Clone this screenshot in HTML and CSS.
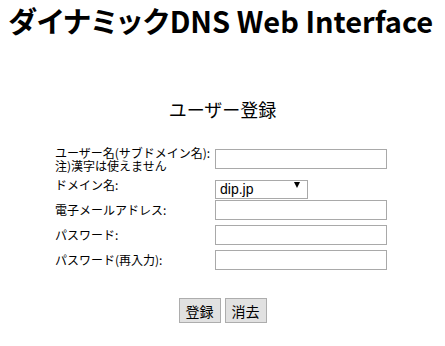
FILE: index.html
```html
<!DOCTYPE html>
<html lang="ja">
<head>
    <meta charset="UTF-8">
    <title>ダイナミックDNS Web Interface - ユーザー登録</title>
    <link rel="stylesheet" href="styles.css">
</head>
<body>
    <!-- ヘッダー -->
    <h1 class="site-title"><span class="title-kana">ダイナミック</span><span class="title-latin">DNS Web Interface</span></h1>

    <!-- ユーザー登録フォーム -->
    <main class="register">
        <h2 class="register-title">ユーザー登録</h2>
        <form class="register-form" onsubmit="return false;">
            <div class="form-grid">
                <label class="form-label label-multi" for="user">ユーザー名(サブドメイン名):<br>注)漢字は使えません</label>
                <div class="form-field"><input type="text" id="user" class="text-input"></div>

                <label class="form-label" for="domain">ドメイン名:</label>
                <div class="form-field">
                    <div class="select-wrap">
                        <select id="domain" class="domain-select">
                            <option>dip.jp</option>
                        </select>
                    </div>
                </div>

                <label class="form-label" for="mail">電子メールアドレス:</label>
                <div class="form-field"><input type="text" id="mail" class="text-input"></div>

                <label class="form-label" for="pass">パスワード:</label>
                <div class="form-field"><input type="password" id="pass" class="text-input"></div>

                <label class="form-label" for="pass2">パスワード(再入力):</label>
                <div class="form-field"><input type="password" id="pass2" class="text-input"></div>
            </div>

            <div class="form-actions">
                <button type="submit" class="form-btn">登録</button>
                <button type="reset" class="form-btn">消去</button>
            </div>
        </form>
    </main>
</body>
</html>
```

FILE: styles.css
```css
body {
    margin: 0;
    padding: 4px 8px;
    font-family: "Noto Sans CJK JP", sans-serif;
    color: #000000;
    background: #FFFFFF;
}
/* ヘッダー */
.site-title {
    margin: 0;
    font-size: 29px;
    line-height: 32px;
    font-weight: bold;
    font-feature-settings: "palt";
    white-space: nowrap;
}
.title-kana {
    letter-spacing: 0.8px;
}
.title-latin {
    letter-spacing: 0;
}
/* 見出し */
.register-title {
    margin: 61px 0 0;
    font-size: 18px;
    line-height: 24px;
    font-weight: normal;
    text-align: center;
}
/* フォーム */
.register-form {
    width: 335px;
    margin: 24px auto 0;
}
.form-grid {
    display: grid;
    grid-template-columns: 160px 175px;
    grid-template-rows: 27px 25px 25px 25px 25px;
}
.form-label {
    display: flex;
    align-items: center;
    font-size: 12px;
    line-height: 13px;
    white-space: nowrap;
}
.label-multi {
    line-height: 13px;
}
.form-field {
    display: flex;
    align-items: center;
}
.text-input {
    box-sizing: border-box;
    width: 172px;
    height: 20px;
    margin: 0;
    padding: 1px 3px;
    border: 1px solid #A9A9A9;
    font-size: 13px;
    background: #FFFFFF;
}
.select-wrap {
    position: relative;
    width: 93px;
    height: 19px;
}
.select-wrap::after {
    content: "";
    position: absolute;
    right: 8px;
    top: 7px;
    border-left: 3px solid transparent;
    border-right: 3px solid transparent;
    border-top: 6px solid #000000;
    pointer-events: none;
}
.domain-select {
    appearance: none;
    box-sizing: border-box;
    width: 100%;
    height: 100%;
    margin: 0;
    padding: 0 4px;
    border: 1px solid #A9A9A9;
    border-radius: 0;
    background: #FFFFFF;
    font-family: "Liberation Sans", sans-serif;
    font-size: 14px;
    line-height: 17px;
    color: #000000;
}
/* ボタン */
.form-actions {
    display: flex;
    justify-content: center;
    gap: 4px;
    margin-top: 26px;
}
.form-btn {
    box-sizing: border-box;
    height: 25px;
    padding: 0 6px;
    border: 1px solid #ADADAD;
    border-radius: 0;
    background: #E1E1E1;
    font-family: "Noto Sans CJK JP", sans-serif;
    font-size: 14px;
    color: #000000;
}
```
